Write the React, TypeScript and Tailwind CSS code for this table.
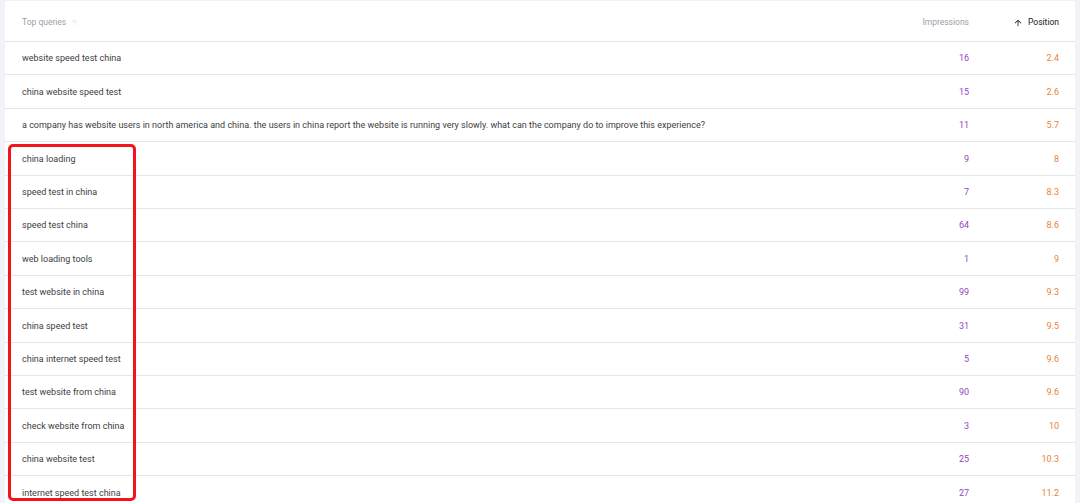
const rows = [
  { q: "website speed test china", imp: 16, pos: "2.4" },
  { q: "china website speed test", imp: 15, pos: "2.6" },
  {
    q: "a company has website users in north america and china. the users in china report the website is running very slowly. what can the company do to improve this experience?",
    imp: 11,
    pos: "5.7",
  },
  { q: "china loading", imp: 9, pos: "8" },
  { q: "speed test in china", imp: 7, pos: "8.3" },
  { q: "speed test china", imp: 64, pos: "8.6" },
  { q: "web loading tools", imp: 1, pos: "9" },
  { q: "test website in china", imp: 99, pos: "9.3" },
  { q: "china speed test", imp: 31, pos: "9.5" },
  { q: "china internet speed test", imp: 5, pos: "9.6" },
  { q: "test website from china", imp: 90, pos: "9.6" },
  { q: "check website from china", imp: 3, pos: "10" },
  { q: "china website test", imp: 25, pos: "10.3" },
  { q: "internet speed test china", imp: 27, pos: "11.2" },
]

function ArrowUp({ className }: { className?: string }) {
  return (
    <svg viewBox="0 0 24 24" className={className} fill="currentColor">
      <path d="M4 12l1.41 1.41L11 7.83V20h2V7.83l5.58 5.59L20 12l-8-8-8 8z" />
    </svg>
  )
}

export default function App() {
  return (
    <div
      className="w-[1080px] h-[503px] overflow-hidden bg-[#f1f3f8] pt-px pl-[5px] pr-[5px] relative"
      style={{ fontFamily: "Roboto, 'Liberation Sans', sans-serif" }}
    >
      <div className="bg-white w-[1070px] h-full">
        {/* Header */}
        <div className="flex items-center h-[41px] pt-[3px] border-b border-[#e6e6e6] text-[8.5px]">
          <div className="flex-1 pl-[17px] flex items-center gap-[4px] text-[#9aa0a6]">
            Top queries
            <ArrowUp className="w-[9px] h-[9px] text-[#e8eaed]" />
          </div>
          <div className="w-[100px] text-right text-[#9aa0a6]">Impressions</div>
          <div className="w-[106px] pr-[16px] flex items-center justify-end gap-[5px] text-[#202124]">
            <ArrowUp className="w-[10px] h-[10px]" />
            Position
          </div>
        </div>

        {/* Rows */}
        {rows.map((r, i) => (
          <div
            key={i}
            className="flex items-center h-[33.4px] pt-[2px] border-b border-[#e6e6e6] text-[9px]"
          >
            <div className="flex-1 pl-[17px] text-[#3c4043] whitespace-nowrap">{r.q}</div>
            <div className="w-[100px] text-right text-[#9446c4]">{r.imp}</div>
            <div className="w-[106px] pr-[16px] text-right text-[#e8833a]">{r.pos}</div>
          </div>
        ))}
      </div>

      {/* highlight box */}
      <div className="absolute left-[8px] top-[144px] w-[128px] h-[357px] border-[3px] border-[#f5131b] rounded-[5px]" />
    </div>
  )
}
